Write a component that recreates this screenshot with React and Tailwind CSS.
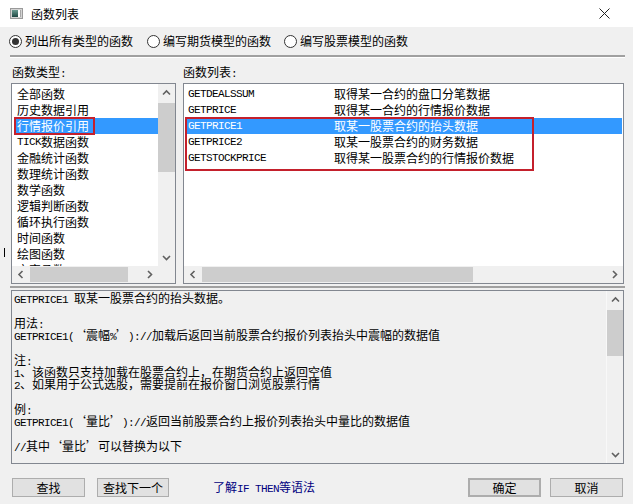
import React from "react";

const MONO = "font-['Liberation_Mono',monospace] text-[11px] tracking-[-0.6px]";

function M({ children }) {
  return <span className={MONO}>{children}</span>;
}

function QL() {
  return <span className="inline-block w-[12px] text-right">‘</span>;
}
function QR() {
  return <span className="inline-block w-[12px] text-left">’</span>;
}

function Chev({ dir }) {
  const vert = dir === "up" || dir === "down";
  const d = {
    up: "M1 5.5L4.5 2L8 5.5",
    down: "M1 2L4.5 5.5L8 2",
    left: "M5.5 1L2 4.5L5.5 8",
    right: "M2 1L5.5 4.5L2 8",
  }[dir];
  return (
    <svg width={vert ? 9 : 7} height={vert ? 7 : 9} viewBox={vert ? "0 0 9 7" : "0 0 7 9"}>
      <path d={d} fill="none" stroke="#606060" strokeWidth="1.6" />
    </svg>
  );
}

function VScroll({ thumbTop, thumbH, extra = "" }) {
  return (
    <div className={"w-[17px] shrink-0 flex flex-col bg-[#f0f0f0] " + extra}>
      <div className="h-[17px] flex items-center justify-center">
        <Chev dir="up" />
      </div>
      <div className="flex-1 flex flex-col">
        <div style={{ height: thumbTop }} />
        <div className="bg-[#cdcdcd]" style={{ height: thumbH }} />
      </div>
      <div className="h-[17px] flex items-center justify-center">
        <Chev dir="down" />
      </div>
    </div>
  );
}

function HScroll({ thumbLeft, thumbW }) {
  return (
    <div className="h-[17px] flex-1 flex bg-[#f0f0f0]">
      <div className="w-[17px] flex items-center justify-center">
        <Chev dir="left" />
      </div>
      <div className="flex-1 flex py-[1px]">
        <div style={{ width: thumbLeft }} />
        <div className="bg-[#cdcdcd]" style={{ width: thumbW }} />
      </div>
      <div className="w-[17px] flex items-center justify-center">
        <Chev dir="right" />
      </div>
    </div>
  );
}

function Radio({ checked }) {
  return (
    <span className="w-[13px] h-[13px] rounded-full border border-[#333333] bg-white flex items-center justify-center shrink-0">
      {checked && <span className="w-[7px] h-[7px] rounded-full bg-[#333333]" />}
    </span>
  );
}

function Btn({ children, extra = "" }) {
  return (
    <div
      className={
        "h-[19px] flex items-center justify-center bg-[#e1e1e1] border border-[#adadad] " + extra
      }
    >
      {children}
    </div>
  );
}

const leftItems = [
  "全部函数",
  "历史数据引用",
  "行情报价引用",
  "TICK数据函数",
  "金融统计函数",
  "数理统计函数",
  "数学函数",
  "逻辑判断函数",
  "循环执行函数",
  "时间函数",
  "绘图函数",
  "文字函数",
];

const rightItems = [
  ["GETDEALSSUM", "取得某一合约的盘口分笔数据"],
  ["GETPRICE", "取得某一合约的行情报价数据"],
  ["GETPRICE1", "取某一股票合约的抬头数据"],
  ["GETPRICE2", "取某一股票合约的财务数据"],
  ["GETSTOCKPRICE", "取得某一股票合约的行情报价数据"],
];

function LeftLabel({ text }) {
  if (text.startsWith("TICK")) {
    return (
      <>
        <M>TICK</M>
        {text.slice(4)}
      </>
    );
  }
  return text;
}

function Line({ children }) {
  return <div className="h-[12.33px] leading-[12px] whitespace-nowrap">{children}</div>;
}

export default function App() {
  return (
    <div className="w-[633px] h-[504px] bg-[#f0f0f0] overflow-hidden relative text-[12px] text-black font-['Noto_Sans_CJK_SC',sans-serif] leading-none">
      {/* title bar */}
      <div className="h-[27px] bg-white flex items-center">
        <svg className="ml-[10px]" width="13" height="11" viewBox="0 0 13 11">
          <defs>
            <linearGradient id="ig" x1="0" y1="0" x2="0" y2="1">
              <stop offset="0" stopColor="#6a9a90" />
              <stop offset="1" stopColor="#1d4742" />
            </linearGradient>
          </defs>
          <rect x="0.5" y="0.5" width="12" height="10" fill="#d4d4d4" stroke="#9a9a9a" />
          <rect x="2" y="2" width="6" height="7" fill="url(#ig)" />
          <rect x="8" y="2" width="2" height="7" fill="#ffffff" />
          <rect x="10" y="2" width="1" height="7" fill="#a8a8a8" />
        </svg>
        <span className="ml-[8px]">函数列表</span>
        <svg className="ml-auto mr-[23px]" width="11" height="11" viewBox="0 0 11 11">
          <path d="M0.5 0.5L10.5 10.5M10.5 0.5L0.5 10.5" stroke="#222" strokeWidth="1" />
        </svg>
      </div>

      <div className="pl-[11px] pr-[9px]">
        {/* radios */}
        <div className="mt-[6px] h-[16px] flex items-center -ml-[2px]">
          <Radio checked />
          <span className="ml-[3px]">列出所有类型的函数</span>
          <span className="ml-[14px]">
            <Radio />
          </span>
          <span className="ml-[3px]">编写期货模型的函数</span>
          <span className="ml-[13px]">
            <Radio />
          </span>
          <span className="ml-[3px]">编写股票模型的函数</span>
        </div>

        {/* separator */}
        <div className="mt-[6px] -mx-[1px] h-[2px] bg-[#a0a0a0]" />
        <div className="-mx-[1px] h-[1px] bg-white" />

        {/* labels */}
        <div className="mt-[9px] h-[12px] flex items-center">
          <div className="w-[172px] pl-[1px]">
            函数类型<M>:</M>
          </div>
          <div>
            函数列表<M>:</M>
          </div>
        </div>

        {/* lists */}
        <div className="mt-[4px] flex gap-[7px]">
          {/* left list */}
          <div className="w-[165px] h-[201px] border border-[#828790] bg-white flex flex-col">
            <div className="flex flex-1 min-h-0">
              <div className="flex-1 overflow-hidden pt-[2px] pl-[2px] relative">
                {leftItems.map((t, i) => (
                  <div
                    key={t}
                    className={
                      "h-[16px] flex items-center pl-[3px] whitespace-nowrap " +
                      (i === 2 ? "bg-[#3399ff] text-white" : "")
                    }
                  >
                    <LeftLabel text={t} />
                  </div>
                ))}
                <div className="absolute left-[2px] top-[33px] w-[81px] h-[18px] border-2 border-[#c4202c]" />
              </div>
              <VScroll thumbTop={2} thumbH={69} />
            </div>
            <div className="flex">
              <HScroll thumbLeft={1} thumbW={98} />
              <div className="w-[17px] h-[17px] bg-[#f0f0f0]" />
            </div>
          </div>

          {/* right list */}
          <div className="flex-1 h-[201px] border border-[#828790] bg-white flex flex-col">
            <div className="flex-1 min-h-0 pt-[2px] pl-[3px] pr-[1px] relative">
              {rightItems.map(([n, d], i) => (
                <div
                  key={n}
                  className={
                    "h-[16px] flex items-center whitespace-nowrap " +
                    (i === 2 ? "bg-[#3399ff] text-white" : "")
                  }
                >
                  <span className={MONO + " w-[147px] pl-[1px]"}>{n}</span>
                  <span>{d}</span>
                </div>
              ))}
              <div className="absolute left-[1px] top-[33px] w-[349px] h-[54px] border-2 border-[#c4202c]" />
            </div>
            <div className="flex">
              <HScroll thumbLeft={1} thumbW={271} />
            </div>
          </div>
        </div>

        {/* separator */}
        <div className="mt-[2px] -mx-[1px] h-[2px] bg-[#a0a0a0]" />

        {/* description */}
        <div className="mt-[2px] h-[174px] border border-[#828790] bg-[#f0f0f0] flex">
          <div className="flex-1 pl-[2px] pt-[1px] overflow-hidden">
            <Line>
              <M>GETPRICE1 </M>取某一股票合约的抬头数据。
            </Line>
            <Line />
            <Line>
              用法<M>:</M>
            </Line>
            <Line>
              <M>GETPRICE1(</M>
              <QL />
              震幅<M>%</M>
              <QR />
              <M>)://</M>加载后返回当前股票合约报价列表抬头中震幅的数据值
            </Line>
            <Line />
            <Line>
              注<M>:</M>
            </Line>
            <Line>
              <M>1</M>、该函数只支持加载在股票合约上，在期货合约上返回空值
            </Line>
            <Line>
              <M>2</M>、如果用于公式选股，需要提前在报价窗口浏览股票行情
            </Line>
            <Line />
            <Line>
              例<M>:</M>
            </Line>
            <Line>
              <M>GETPRICE1(</M>
              <QL />
              量比
              <QR />
              <M>)://</M>返回当前股票合约上报价列表抬头中量比的数据值
            </Line>
            <Line />
            <Line>
              <M>//</M>其中<QL />量比<QR />可以替换为以下
            </Line>
          </div>
          <VScroll thumbTop={2} thumbH={46} extra="border-l border-[#f8f8f8]" />
        </div>

        {/* buttons */}
        <div className="mt-[14px] flex items-center">
          <Btn extra="ml-[1px] w-[73px]">查找</Btn>
          <Btn extra="ml-[12px] w-[72px]">查找下一个</Btn>
          <span className="ml-[44px] text-[#000080]">
            了解<M>IF THEN</M>等语法
          </span>
          <Btn extra="ml-auto w-[73px] border-2 border-[#0078d7]">确定</Btn>
          <Btn extra="ml-[9px] mr-[1px] w-[73px]">取消</Btn>
        </div>
      </div>

      {/* stray caret */}
      <div className="absolute left-[4px] top-[248px] w-[1px] h-[9px] bg-black" />
    </div>
  );
}
